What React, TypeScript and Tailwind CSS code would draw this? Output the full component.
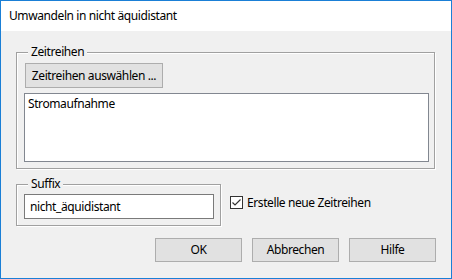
export default function App() {
  return (
    <div
      className="w-[452px] h-[279px] border border-[#1a7fd6] bg-[#f0f0f0] flex flex-col text-[12px] tracking-[-0.4px] text-black"
      style={{ fontFamily: '"Noto Sans", "Segoe UI", sans-serif' }}
    >
      {/* TITLE */}
      <div className="h-[30px] bg-white flex items-center pl-[8px] leading-none">
        Umwandeln in nicht äquidistant
      </div>

      {/* BODY */}
      <div className="flex-1 pt-[21px] pl-[15px] pr-[16px]">
        {/* Zeitreihen group */}
        <div className="relative w-[419px] h-[117px] border border-[#a0a0a0] shadow-[inset_1px_1px_0_#fff,1px_1px_0_#fff] pt-[10px] pl-[7px] pr-[5px]">
          <span className="absolute left-[11px] top-[-9px] px-[3px] bg-[#f0f0f0] leading-[16px]">
            Zeitreihen
          </span>
          <button className="ml-[1px] w-[138px] h-[25px] border border-[#adadad] bg-[#e1e1e1] leading-none">
            Zeitreihen auswählen ...
          </button>
          <div className="mt-[5px] h-[69px] border border-[#828790] bg-white px-[3px] pt-[2px] leading-[16px]">
            Stromaufnahme
          </div>
        </div>

        {/* Suffix + checkbox */}
        <div className="mt-[15px] flex items-start">
          <div className="relative w-[205px] h-[42px] border border-[#a0a0a0] shadow-[inset_1px_1px_0_#fff,1px_1px_0_#fff] pt-[9px] pl-[7px]">
            <span className="absolute left-[11px] top-[-9px] px-[3px] bg-[#f0f0f0] leading-[16px]">
              Suffix
            </span>
            <div className="w-[190px] h-[25px] border border-[#7a7a7a] bg-white flex items-center px-[5px] leading-none">
              nicht_äquidistant
            </div>
          </div>
          <label className="ml-[9px] mt-[12px] flex items-center gap-[4px] leading-none">
            <span className="w-[13px] h-[13px] border border-[#333] bg-white flex items-center justify-center">
              <svg width="11" height="11" viewBox="0 0 11 11">
                <polyline points="1.5,5.5 4,8 9.5,2.5" fill="none" stroke="#333" strokeWidth="1.2" />
              </svg>
            </span>
            Erstelle neue Zeitreihen
          </label>
        </div>

        {/* Buttons */}
        <div className="mt-[12px] flex justify-end gap-[10px] mr-[-1px]">
          <button className="w-[87px] h-[24px] border border-[#adadad] bg-[#e1e1e1] leading-none">OK</button>
          <button className="w-[87px] h-[24px] border border-[#adadad] bg-[#e1e1e1] leading-none">Abbrechen</button>
          <button className="w-[87px] h-[24px] border border-[#adadad] bg-[#e1e1e1] leading-none">Hilfe</button>
        </div>
      </div>
    </div>
  );
}
